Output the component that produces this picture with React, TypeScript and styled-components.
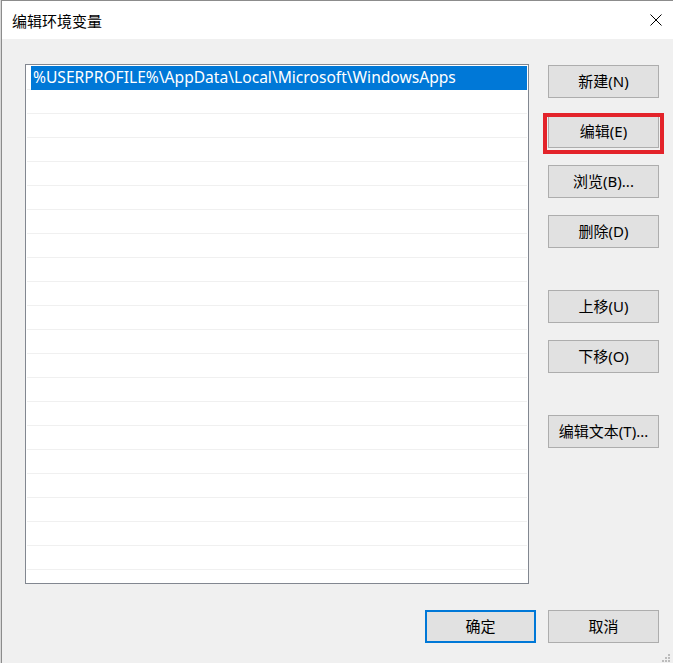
import React from 'react'
import styled, { createGlobalStyle } from 'styled-components'

const GlobalStyle = createGlobalStyle`
  html, body {
    margin: 0;
    padding: 0;
    background: #d8d8d8;
  }
  body {
    font-family: 'Noto Sans', 'Noto Sans CJK SC', sans-serif;
    font-size: 15px;
    color: #000;
  }
`

const Page = styled.div`
  padding-left: 1px;
  width: 672px;
  height: 663px;
  overflow: hidden;
`

const Window = styled.div`
  position: relative;
  display: flex;
  flex-direction: column;
  height: 662px;
  border-top: 1px solid #8c8c8c;
  border-left: 1px solid #8c8c8c;
  background: #f0f0f0;
`

const TitleBar = styled.div`
  display: flex;
  align-items: center;
  justify-content: space-between;
  height: 38px;
  padding: 0 11px 0 10px;
  background: #ffffff;
`

const Title = styled.div`
  font-family: 'Noto Sans CJK SC', sans-serif;
  font-size: 15px;
  line-height: 20px;
  margin-top: 2px;
`

const CloseButton = styled.div`
  width: 12px;
  height: 12px;
  display: flex;
`

const Body = styled.div`
  flex: 1;
  display: flex;
  flex-direction: column;
  padding: 25px 14px 0 23px;
`

const MainRow = styled.div`
  display: flex;
  gap: 19px;
`

const ListBox = styled.div`
  width: 502px;
  height: 517px;
  border: 1px solid #828790;
  background: #ffffff;
  padding-top: 1px;
  overflow: hidden;
`

const Row = styled.div`
  height: 23px;
  margin: 0 1px;
  border-bottom: 1px solid #f0f0f0;
  display: flex;
`

const Selected = styled.div`
  flex: 1;
  margin: 0 0 -1px 4px;
  padding-left: 2px;
  background: #0078d7;
  color: #ffffff;
  font-family: 'Noto Sans', sans-serif;
  font-size: 15.6px;
  line-height: 23px;
  white-space: nowrap;
`

const SideColumn = styled.div`
  display: flex;
  flex-direction: column;
  gap: 42px;
  padding-top: 1px;
`

const ButtonGroup = styled.div`
  display: flex;
  flex-direction: column;
  gap: 17px;
`

const Button = styled.button<{ $default?: boolean }>`
  box-sizing: border-box;
  width: 111px;
  height: 33px;
  padding: 0 0 3px;
  background: #e1e1e1;
  border: ${(p) => (p.$default ? '2px solid #0078d7' : '1px solid #adadad')};
  font-family: 'Noto Sans', 'Noto Sans CJK SC', sans-serif;
  font-size: 15px;
  color: #000;
  display: flex;
  align-items: center;
  justify-content: center;
`

const Highlight = styled.div`
  position: relative;
  &::after {
    content: '';
    position: absolute;
    top: -2px;
    left: -5px;
    right: -5px;
    bottom: -6px;
    border: 4px solid #e3232a;
    pointer-events: none;
  }
`

const Footer = styled.div`
  display: flex;
  justify-content: flex-end;
  gap: 12px;
  margin-top: 26px;
`

const Grip = styled.svg`
  position: absolute;
  right: 2px;
  bottom: 0;
`

const rows = Array.from({ length: 22 }, (_, i) => i)

export default function App() {
  return (
    <Page>
      <GlobalStyle />
      <Window>
        <TitleBar>
          <Title>编辑环境变量</Title>
          <CloseButton>
            <svg width="12" height="12" viewBox="0 0 12 12">
              <path d="M0.5 0.5 L11.5 11.5 M11.5 0.5 L0.5 11.5" stroke="#000" strokeWidth="1" fill="none" />
            </svg>
          </CloseButton>
        </TitleBar>
        <Body>
          <MainRow>
            <ListBox>
              {rows.map((i) => (
                <Row key={i}>
                  {i === 0 && <Selected>%USERPROFILE%\AppData\Local\Microsoft\WindowsApps</Selected>}
                </Row>
              ))}
            </ListBox>
            <SideColumn>
              <ButtonGroup>
                <Button>新建(N)</Button>
                <Highlight>
                  <Button>编辑(E)</Button>
                </Highlight>
                <Button>浏览(B)...</Button>
                <Button>删除(D)</Button>
              </ButtonGroup>
              <ButtonGroup>
                <Button>上移(U)</Button>
                <Button>下移(O)</Button>
              </ButtonGroup>
              <ButtonGroup>
                <Button>编辑文本(T)...</Button>
              </ButtonGroup>
            </SideColumn>
          </MainRow>
          <Footer>
            <Button $default>确定</Button>
            <Button>取消</Button>
          </Footer>
        </Body>
        <Grip width="9" height="9" viewBox="0 0 9 9">
          <rect x="6" y="0" width="2" height="2" fill="#bcbcbc" />
          <rect x="3" y="3" width="2" height="2" fill="#bcbcbc" />
          <rect x="6" y="3" width="2" height="2" fill="#bcbcbc" />
          <rect x="0" y="6" width="2" height="2" fill="#bcbcbc" />
          <rect x="3" y="6" width="2" height="2" fill="#bcbcbc" />
          <rect x="6" y="6" width="2" height="2" fill="#bcbcbc" />
        </Grip>
      </Window>
    </Page>
  )
}
